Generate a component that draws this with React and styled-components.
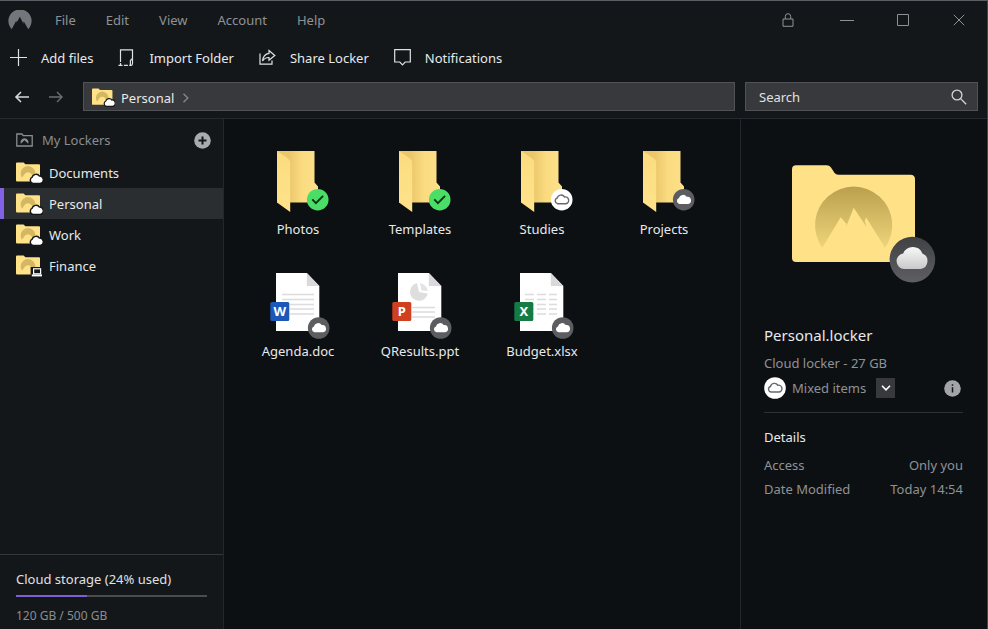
import { useState } from 'react'
import styled, { createGlobalStyle } from 'styled-components'

const GlobalStyle = createGlobalStyle`
  * {
    box-sizing: border-box;
  }

  body {
    margin: 0;
    background: #0d1013;
    color: #e8e9ea;
    font-family: 'Noto Sans', 'Open Sans', sans-serif;
    font-size: 13px;
    line-height: 20px;
  }

  button, input, select {
    font: inherit;
    color: inherit;
  }

  button {
    padding: 0;
    border: 0;
    background: none;
    cursor: pointer;
  }

  svg {
    display: block;
    flex: none;
  }
`

const Window = styled.div`
  display: flex;
  flex-direction: column;
  min-height: 100vh;
  border-top: 1px solid #5a5f66;
  border-right: 1px solid #43464e;
`

const Header = styled.header`
  background: #14171a;
  border-bottom: 1px solid #26292d;
`

const TitleBar = styled.div`
  display: flex;
  align-items: center;
  height: 38px;
  padding-left: 8px;
`

const Menu = styled.nav`
  display: flex;
  gap: 30px;
  flex: 1;
  margin-left: 23px;
`

const MenuButton = styled.button`
  color: #8f9295;
`

const WindowButton = styled.button`
  display: flex;
  align-items: center;
  justify-content: center;
  width: ${props => props.$wide ? '62px' : '56px'};
  height: 38px;
  color: #8f9295;
`

const Toolbar = styled.div`
  display: flex;
  align-items: center;
  gap: 25px;
  height: 38px;
  padding-left: 10px;
`

const ToolButton = styled.button`
  display: flex;
  align-items: center;
  gap: 14px;
  white-space: nowrap;
`

const NavBar = styled.div`
  display: flex;
  align-items: center;
  gap: 10px;
  padding: 5px 9px 7px 14px;
`

const Arrows = styled.div`
  display: flex;
  gap: 18px;
  margin-right: 9px;
`

const ArrowButton = styled.button`
  color: ${props => props.disabled ? '#6c6f73' : '#d5d7d9'};
`

const Field = styled.div`
  display: flex;
  align-items: center;
  height: 29px;
  background: #38393c;
  border: 1px solid #505256;
`

const PathField = styled(Field)`
  flex: 1;
  gap: 8px;
  padding: 2px 0 0 8px;
`

const PathLink = styled.a`
  display: flex;
  align-items: center;
  gap: 6px;
  color: #e8e9ea;
  text-decoration: none;
`

const SearchField = styled(Field)`
  width: 233px;
  padding: 0 10px 0 13px;
`

const SearchInput = styled.input`
  flex: 1;
  min-width: 0;
  padding: 0;
  border: 0;
  outline: 0;
  background: none;

  &::placeholder {
    color: #e0e1e3;
    opacity: 1;
  }
`

const Body = styled.div`
  display: flex;
  flex: 1;
`

const Sidebar = styled.aside`
  display: flex;
  flex-direction: column;
  width: 224px;
  background: #14171a;
  border-right: 1px solid #23262a;
`

const SidebarHeader = styled.div`
  display: flex;
  align-items: center;
  gap: 9px;
  padding: 11px 12px 7px 16px;
  color: #8a8d90;
`

const SidebarTitle = styled.h2`
  flex: 1;
  margin: 0;
  font-size: 13px;
  font-weight: 400;
`

const LockerList = styled.ul`
  flex: 1;
  margin: 0;
  padding: 0;
  list-style: none;
`

const LockerButton = styled.button`
  display: flex;
  align-items: center;
  gap: 6px;
  width: 100%;
  height: 31px;
  padding-left: 12px;
  border-left: 4px solid ${props => props.$active ? '#8162e6' : 'transparent'};
  background: ${props => props.$active ? '#2b2e31' : 'transparent'};
`

const Storage = styled.section`
  padding: 14px 16px 3px;
  border-top: 1px solid #34373b;
`

const StorageTrack = styled.div`
  height: 2px;
  margin: 6px 0 9px;
  background: #4a4c50;
`

const StorageFill = styled.div`
  height: 2px;
  background: #7c5fd3;
`

const StorageText = styled.div`
  font-size: ${props => props.$muted ? '12px' : '13px'};
  color: ${props => props.$muted ? '#8a8d90' : '#e0e1e3'};
`

const Files = styled.main`
  display: grid;
  grid-template-columns: repeat(auto-fill, 122px);
  align-content: start;
  row-gap: 31px;
  flex: 1;
  padding: 29px 0 29px 13px;
`

const FileTile = styled.button`
  display: flex;
  flex-direction: column;
  align-items: center;
`

const Details = styled.aside`
  display: flex;
  flex-direction: column;
  width: 247px;
  padding: 46px 24px 24px 23px;
  border-left: 1px solid #23262a;
`

const Preview = styled.div`
  display: flex;
  justify-content: center;
  margin-bottom: 42px;
`

const DetailsTitle = styled.h1`
  margin: 0 0 8px;
  font-size: 15px;
  font-weight: 400;
  line-height: 20px;
`

const Muted = styled.div`
  color: #8f9295;
`

const StatusRow = styled.div`
  display: flex;
  align-items: center;
  gap: 6px;
  padding: 4px 2px 13px 0;
  border-bottom: 1px solid #2e3134;
  color: #8f9295;
`

const SelectWrap = styled.div`
  position: relative;
  flex: none;
  width: 103px;
  margin-right: auto;
`

const StatusSelect = styled.select`
  appearance: none;
  width: 100%;
  height: 20px;
  padding: 0;
  border: 0;
  background: none;
  line-height: 20px;
`

const SelectArrow = styled.span`
  position: absolute;
  top: 0;
  right: 0;
  display: flex;
  align-items: center;
  justify-content: center;
  width: 19px;
  height: 20px;
  background: #38393c;
  color: #ffffff;
  pointer-events: none;
`

const SectionTitle = styled.h2`
  margin: 14px 0 8px;
  font-size: 13px;
  font-weight: 400;
`

const Facts = styled.dl`
  display: grid;
  grid-template-columns: auto auto;
  justify-content: space-between;
  row-gap: 4px;
  margin: 0;
  color: #8f9295;
`

const FactValue = styled.dd`
  margin: 0;
  text-align: right;
`

const CLOUD = 'M-4.2 4.2 A3 3 0 0 1 -4.8 -1.6 A4.3 4.3 0 0 1 3 -2.9 A3.6 3.6 0 0 1 4.4 4.2 Z'
const MOUNTAIN = 'M30.3 82.7 A38.6 38.6 0 1 1 93 82.7 L74 52.2 L72.8 56 L74.5 62 L61.7 42.7 L54 62 L54.5 59 L48.7 52.2 Z'

function BrandLogo() {
    return (
        <svg width="24" height="20" viewBox="0 0 24 20" fill="#73767a">
            <path d="M3.7 19.2 A11.6 11.6 0 1 1 20.3 19.2 L15.8 11.6 L15.2 12.6 L15.8 14.4 L11.9 6.8 L8.3 13.2 L8.8 11.7 L8.1 11 Z" />
        </svg>
    )
}

function LockerIcon({ kind, size = 27 }) {
    return (
        <svg width={size} height={Math.round(size * 22 / 27)} viewBox="0 0 27 22">
            <path d="M0 1.6 Q0 .5 1 .5 H7.6 L9.4 2.2 H23 Q24 2.2 24 3.2 V18.6 Q24 19.6 23 19.6 H1 Q0 19.6 0 18.6 Z" fill="#ffe188" />
            <path d="M6 15.8 A7.4 7.4 0 1 1 18 15.8 L15.4 12 A4.2 4.2 0 0 0 8.6 12 Z" fill="#d3b762" />
            {kind === 'device' ? (
                <>
                    <rect x="14.6" y="12" width="12" height="10" fill="#14171a" />
                    <rect x="17.6" y="13.8" width="7" height="5" fill="#14171a" stroke="#fff" strokeWidth="1.2" />
                    <path d="M15.8 19.4 H26 V21.4 H15.8 Z" fill="#fff" />
                </>
            ) : (
                <g transform="translate(20.6 17.2)">
                    <path d={CLOUD} fill="#fff" stroke="#14171a" strokeWidth="3.4" paintOrder="stroke" transform="scale(.82 .85)" />
                </g>
            )}
        </svg>
    )
}

function StatusBadge({ status }) {
    if (status === 'synced') {
        return (
            <>
                <circle r="10.8" fill="#4ade66" />
                <path d="M-5.4 -.4 L-1.8 3.4 L5.4 -3.8" fill="none" stroke="#12301a" strokeWidth="1.9" />
            </>
        )
    }
    if (status === 'mixed') {
        return (
            <>
                <circle r="10.8" fill="#fff" />
                <path d={CLOUD} fill="none" stroke="#66686c" strokeWidth="1.5" transform="scale(.95)" />
            </>
        )
    }
    return (
        <>
            <circle r="10.8" fill="#5c5d61" />
            <path d={CLOUD} fill="#fff" />
        </>
    )
}

function FolderIcon({ status }) {
    return (
        <svg width="64" height="71" viewBox="0 0 64 71">
            <defs>
                <linearGradient id="folderBack" x1="0" x2="1">
                    <stop offset="0.3" stopColor="#ebc76a" />
                    <stop offset="0.6" stopColor="#fadb80" />
                    <stop offset="1" stopColor="#fde08a" />
                </linearGradient>
                <linearGradient id="folderFlap" x1="0" y1="0" x2="0" y2="1">
                    <stop offset="0" stopColor="#fbdc80" />
                    <stop offset="1" stopColor="#ffe28a" />
                </linearGradient>
            </defs>
            <path d="M11 3 H48.5 V34.5 L52 38.5 V54.5 H11 Z" fill="url(#folderBack)" />
            <path d="M11 3 L22 10.5 Q24.2 12 24.2 14.5 V64 L11 54.5 Z" fill="url(#folderFlap)" />
            <g transform="translate(51.7 51.7)">
                <StatusBadge status={status} />
            </g>
        </svg>
    )
}

const DOC_TYPES = {
    word: { letter: 'W', color: '#1b58b8' },
    powerpoint: { letter: 'P', color: '#cf3f20' },
    excel: { letter: 'X', color: '#157a43' }
}

function DocumentIcon({ type, status }) {
    const { letter, color } = DOC_TYPES[type]
    return (
        <svg width="64" height="71" viewBox="0 0 64 71">
            <path d="M10 3 H40.8 L53.3 16 V61 H10 Z" fill="#fff" />
            <path d="M40.8 3 V16 H53.3 Z" fill="#d9d9dc" />
            {type === 'word' && (
                <path d="M16 24.5 H48 M16 29.5 H48 M24 34.5 H48 M24 39 H48 M24 44 H48" stroke="#dcdcdf" strokeWidth="1.3" />
            )}
            {type === 'powerpoint' && (
                <>
                    <path d="M29 13 A9 9 0 1 0 39.8 23.5 L31 22 Z" fill="#dededf" />
                    <path d="M32 13.2 A9 9 0 0 1 39.8 21 L33.5 20.4 Z" fill="#e4e4e6" />
                    <path d="M24 37.5 H47 M24 42 H47 M24 47 H47" stroke="#dcdcdf" strokeWidth="1.3" />
                </>
            )}
            {type === 'excel' && (
                <path d="M15 24.5 H47 M15 29.5 H47 M15 34.5 H47 M15 39 H47 M15 44 H47" stroke="#dcdcdf" strokeWidth="1.3" strokeDasharray="9 3" />
            )}
            <rect x="4.3" y="32" width="19" height="19" rx="1.5" fill={color} />
            <text x="13.8" y="46" textAnchor="middle" fontSize="13" fontWeight="700" fill="#fff">{letter}</text>
            <g transform="translate(52.7 58)">
                <StatusBadge status={status} />
            </g>
        </svg>
    )
}

function LockerPreview() {
    return (
        <svg width="144" height="118" viewBox="0 0 144 118">
            <defs>
                <linearGradient id="mountain" x1="0" y1="0" x2="0" y2="1">
                    <stop offset="0" stopColor="#baa04e" />
                    <stop offset="1" stopColor="#eed57a" />
                </linearGradient>
                <linearGradient id="badge" x1="0" y1="0" x2="0" y2="1">
                    <stop offset="0" stopColor="#404144" />
                    <stop offset="1" stopColor="#5e5f62" />
                </linearGradient>
                <linearGradient id="cloud" x1="0" y1="0" x2="0" y2="1">
                    <stop offset="0" stopColor="#f8f8f8" />
                    <stop offset="1" stopColor="#c9c9cb" />
                </linearGradient>
            </defs>
            <path d="M0 4.5 Q0 .3 4.2 .3 H34.5 Q37.5 .3 39 2.6 L42.6 8 Q43.8 9.7 46.5 9.7 H118.5 Q123 9.7 123 14.2 V93 Q123 97 119 97 H4 Q0 97 0 93 Z" fill="#ffe188" />
            <path d={MOUNTAIN} fill="url(#mountain)" />
            <circle cx="120.4" cy="94.6" r="22.8" fill="url(#badge)" />
            <path d="M112 104 A7.8 7.8 0 0 1 111.2 88.5 A10.4 10.4 0 0 1 130.4 88.4 A8.2 8.2 0 0 1 129 104 Z" fill="url(#cloud)" />
        </svg>
    )
}

const tools = [
    { label: 'Add files', icon: <path d="M8.5 0 V17 M0 8.5 H17" /> },
    {
        label: 'Import Folder',
        icon: (
            <>
                <path d="M2.5 13 V.8 H14.5 V9.5 M14.5 9.5 V14.5 Q14.5 16.3 13.2 16.3 H12.4 V11.5 L14.5 9.5" />
                <path d="M.5 16.3 H12" strokeDasharray="4 1.4" />
                <path d="M2.5 14 V17" />
            </>
        )
    },
    {
        label: 'Share Locker',
        icon: (
            <>
                <path d="M1 4.5 V15.2 H13 V11.5" />
                <path d="M10 1.5 L15.8 6.5 L10 11.2 V8.5 Q6 8.3 3.6 12 Q4.2 5.2 10 4.4 Z" />
            </>
        )
    },
    { label: 'Notifications', icon: <path d="M.7 .7 H16.3 V13 H11.2 L8.5 15.8 L5.8 13 H.7 Z" /> }
]

const lockers = [
    { name: 'Documents', kind: 'cloud' },
    { name: 'Personal', kind: 'cloud' },
    { name: 'Work', kind: 'cloud' },
    { name: 'Finance', kind: 'device' }
]

const files = [
    { name: 'Photos', status: 'synced' },
    { name: 'Templates', status: 'synced' },
    { name: 'Studies', status: 'mixed' },
    { name: 'Projects', status: 'cloud' },
    { name: 'Agenda.doc', status: 'cloud', type: 'word' },
    { name: 'QResults.ppt', status: 'cloud', type: 'powerpoint' },
    { name: 'Budget.xlsx', status: 'cloud', type: 'excel' }
]

export default function App() {
    const [active, setActive] = useState('Personal')
    const [search, setSearch] = useState('')
    const barFill = 37

    return (
        <Window>
            <GlobalStyle />
            <Header>
                <TitleBar>
                    <BrandLogo />
                    <Menu>
                        {['File', 'Edit', 'View', 'Account', 'Help'].map(item => (
                            <MenuButton key={item}>{item}</MenuButton>
                        ))}
                    </Menu>
                    <WindowButton $wide aria-label="Lock">
                        <svg width="12" height="14" viewBox="0 0 12 14" fill="none" stroke="currentColor">
                            <path d="M1 6 H11 V13.3 H1 Z M3.3 6 V3.4 A2.7 2.7 0 0 1 8.7 3.4 V6" />
                        </svg>
                    </WindowButton>
                    <WindowButton aria-label="Minimize">
                        <svg width="14" height="12" viewBox="0 0 14 12" stroke="currentColor"><path d="M0 6.5 H14" /></svg>
                    </WindowButton>
                    <WindowButton aria-label="Maximize">
                        <svg width="12" height="12" viewBox="0 0 12 12" fill="none" stroke="currentColor"><path d="M.5 .5 H11.5 V11.5 H.5 Z" /></svg>
                    </WindowButton>
                    <WindowButton aria-label="Close">
                        <svg width="12" height="12" viewBox="0 0 12 12" stroke="currentColor"><path d="M.8 .8 L11.2 11.2 M11.2 .8 L.8 11.2" /></svg>
                    </WindowButton>
                </TitleBar>

                <Toolbar>
                    {tools.map(tool => (
                        <ToolButton key={tool.label}>
                            <svg width="17" height="18" viewBox="0 0 17 18" fill="none" stroke="#e0e1e3" strokeWidth="1.2">{tool.icon}</svg>
                            {tool.label}
                        </ToolButton>
                    ))}
                </Toolbar>

                <NavBar>
                    <Arrows>
                        <ArrowButton aria-label="Back">
                            <svg width="16" height="12" viewBox="0 0 16 12" fill="none" stroke="currentColor" strokeWidth="1.6">
                                <path d="M15 6 H2 M7 1 L2 6 L7 11" />
                            </svg>
                        </ArrowButton>
                        <ArrowButton aria-label="Forward" disabled>
                            <svg width="16" height="12" viewBox="0 0 16 12" fill="none" stroke="currentColor" strokeWidth="1.4">
                                <path d="M1 6 H14 M9 1 L14 6 L9 11" />
                            </svg>
                        </ArrowButton>
                    </Arrows>
                    <PathField>
                        <PathLink href="#personal">
                            <LockerIcon kind="cloud" size={23} />
                            Personal
                        </PathLink>
                        <svg width="8" height="10" viewBox="0 0 8 10" fill="none" stroke="#85878a" strokeWidth="1.4">
                            <path d="M1.5 .8 L5.8 5 L1.5 9.2" />
                        </svg>
                    </PathField>
                    <SearchField>
                        <SearchInput
                            aria-label="Search"
                            placeholder="Search"
                            value={search}
                            onChange={(e) => setSearch(e.target.value)}
                        />
                        <svg width="16" height="16" viewBox="0 0 16 16" fill="none" stroke="#d5d7d9" strokeWidth="1.3">
                            <circle cx="6" cy="6" r="4.9" />
                            <path d="M9.6 9.6 L15.2 15.2" />
                        </svg>
                    </SearchField>
                </NavBar>
            </Header>

            <Body>
                <Sidebar>
                    <SidebarHeader>
                        <svg width="17" height="14" viewBox="0 0 17 14" fill="none" stroke="currentColor" strokeWidth="1.3">
                            <path d="M.8 1 H6 L7.2 2.6 H16.2 V13 H.8 Z" />
                            <path d="M4.8 10.8 A4 4 0 1 1 12.2 10.8 L8.5 7.2 Z" fill="currentColor" stroke="none" />
                        </svg>
                        <SidebarTitle>My Lockers</SidebarTitle>
                        <button aria-label="Add locker">
                            <svg width="17" height="17" viewBox="0 0 17 17">
                                <circle cx="8.5" cy="8.5" r="8.3" fill="#a9abae" />
                                <path d="M8.5 4.5 V12.5 M4.5 8.5 H12.5" stroke="#14171a" strokeWidth="2" />
                            </svg>
                        </button>
                    </SidebarHeader>
                    <LockerList>
                        {lockers.map(locker => (
                            <li key={locker.name}>
                                <LockerButton $active={locker.name === active} onClick={() => setActive(locker.name)}>
                                    <LockerIcon kind={locker.kind} />
                                    {locker.name}
                                </LockerButton>
                            </li>
                        ))}
                    </LockerList>
                    <Storage>
                        <StorageText>Cloud storage (24% used)</StorageText>
                        <StorageTrack>
                            <StorageFill style={{ width: `${barFill}%` }} />
                        </StorageTrack>
                        <StorageText $muted>120 GB / 500 GB</StorageText>
                    </Storage>
                </Sidebar>

                <Files>
                    {files.map(file => (
                        <FileTile key={file.name}>
                            {file.type
                                ? <DocumentIcon type={file.type} status={file.status} />
                                : <FolderIcon status={file.status} />}
                            {file.name}
                        </FileTile>
                    ))}
                </Files>

                <Details>
                    <Preview>
                        <LockerPreview />
                    </Preview>
                    <DetailsTitle>Personal.locker</DetailsTitle>
                    <Muted>Cloud locker - 27 GB</Muted>
                    <StatusRow>
                        <svg width="22" height="22" viewBox="-11 -11 22 22">
                            <StatusBadge status="mixed" />
                        </svg>
                        <SelectWrap>
                            <StatusSelect aria-label="Sync status">
                                <option>Mixed items</option>
                            </StatusSelect>
                            <SelectArrow>
                                <svg width="10" height="6" viewBox="0 0 10 6" fill="none" stroke="currentColor" strokeWidth="1.6">
                                    <path d="M1 .8 L5 4.8 L9 .8" />
                                </svg>
                            </SelectArrow>
                        </SelectWrap>
                        <button aria-label="Information">
                            <svg width="17" height="17" viewBox="0 0 17 17">
                                <circle cx="8.5" cy="8.5" r="8.3" fill="#a2a4a7" />
                                <path d="M8.5 7.2 V12.6 M8.5 4.2 V5.8" stroke="#14171a" strokeWidth="1.5" />
                            </svg>
                        </button>
                    </StatusRow>
                    <SectionTitle>Details</SectionTitle>
                    <Facts>
                        <dt>Access</dt>
                        <FactValue>Only you</FactValue>
                        <dt>Date Modified</dt>
                        <FactValue>Today 14:54</FactValue>
                    </Facts>
                </Details>
            </Body>
        </Window>
    )
}
